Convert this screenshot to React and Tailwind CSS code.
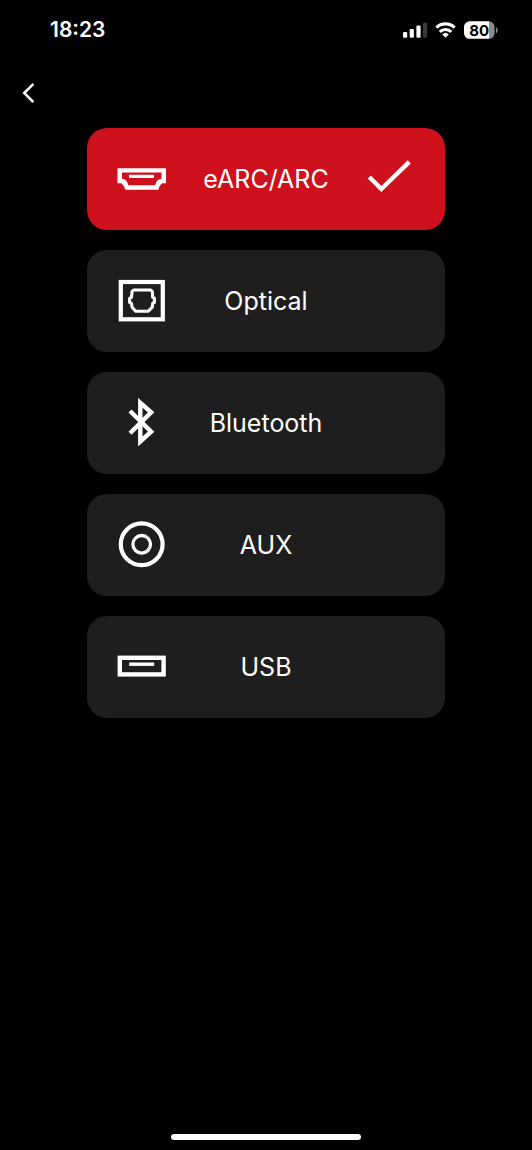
import { useState } from "react";

function HdmiIcon() {
  return (
    <svg viewBox="0 0 50 50" className="size-[50px]" fill="currentColor" aria-hidden="true">
      <path
        fillRule="evenodd"
        d="M.5 14.3H49V29.3H45.2Q42.2 31.5 41.3 35.7H8.3Q7.3 31.5 4.3 29.3H.5ZM5 18.4V24.8L8.2 25.8Q10.4 27.5 11.4 31.2H38.1Q39.1 27.5 41.3 25.8L44.5 24.8V18.4Z"
      />
      <path d="M12 20.8H37V24H12Z" />
    </svg>
  );
}

function OpticalIcon() {
  return (
    <svg viewBox="0 0 50 50" className="size-[50px]" fill="none" stroke="currentColor" aria-hidden="true">
      <rect x="3.8" y="6" width="42" height="37.3" strokeWidth="4.2" />
      <path
        strokeWidth="3.1"
        strokeLinejoin="round"
        d="M16.8 14H33.5L35.3 15.4L35.7 21.4L37.4 22.4V26.4L35.7 27.4L35.3 31.2L31.3 35.2H18.7L15.1 31.2L14.5 27.4L12.6 26.4V22.4L14.5 21.4L15.1 15.4Z"
      />
    </svg>
  );
}

function BluetoothIcon() {
  return (
    <svg viewBox="0 0 50 50" className="size-[50px]" fill="none" stroke="currentColor" aria-hidden="true">
      <path strokeWidth="4.4" d="M13 13L34.2 33.7L23.3 43.5V4.8L34.2 14.4L13 35.3" />
    </svg>
  );
}

function AuxIcon() {
  return (
    <svg viewBox="0 0 50 50" className="size-[50px]" fill="none" stroke="currentColor" aria-hidden="true">
      <circle cx="24.7" cy="24.3" r="20.9" strokeWidth="4.2" />
      <circle cx="24.7" cy="24.3" r="8.8" strokeWidth="3.3" />
    </svg>
  );
}

function UsbIcon() {
  return (
    <svg viewBox="0 0 50 50" className="size-[50px]" fill="none" stroke="currentColor" aria-hidden="true">
      <rect x="2.8" y="15.8" width="43.8" height="16.6" strokeWidth="4.4" />
      <path strokeWidth="3.4" d="M12.2 22.2H37.2" />
    </svg>
  );
}

function CheckIcon() {
  return (
    <svg viewBox="0 0 50 50" className="size-[50px]" fill="none" stroke="currentColor" aria-hidden="true">
      <path strokeWidth="4.4" d="M4.3 23L16.3 35L44.3 7.8" />
    </svg>
  );
}

function StatusIcons() {
  return (
    <svg viewBox="0 0 96 20" className="h-5 w-24" fill="currentColor" role="img" aria-label="Signal, Wi-Fi, battery 80%">
      <rect x="1" y="12" width="4.2" height="5.7" rx="1.2" />
      <rect x="7.7" y="9" width="4.2" height="8.7" rx="1.2" />
      <rect x="14.4" y="5.4" width="4.2" height="12.3" rx="1.2" />
      <rect x="21" y="2.6" width="4.2" height="15.1" rx="1.2" fill="#3a3a3a" />
      <g fill="none" stroke="currentColor" strokeWidth="3.2">
        <path d="M34.4 7.6A13.2 13.2 0 0 1 52.6 7.6" />
        <path d="M37.8 11.8A8.2 8.2 0 0 1 49.2 11.8" />
      </g>
      <path d="M43.5 17.8L40.2 14.4A4.8 4.8 0 0 1 46.8 14.4Z" />
      <path d="M67.5 1.3H87V18.8H67.5A5.5 5.5 0 0 1 62 13.3V6.8A5.5 5.5 0 0 1 67.5 1.3Z" />
      <path fill="#8b8b8b" d="M87 1.3A5.5 5.5 0 0 1 92.5 6.8V13.3A5.5 5.5 0 0 1 87 18.8Z" />
      <path fill="#8b8b8b" d="M94 7.2C96.3 8 96.3 12.4 94 13.2Z" />
      <text x="77.3" y="15.6" textAnchor="middle" fill="#000" className="font-['Inter',sans-serif] text-[15px] font-bold">
        80
      </text>
    </svg>
  );
}

const sources = [
  { id: "arc", label: "eARC/ARC", Icon: HdmiIcon },
  { id: "optical", label: "Optical", Icon: OpticalIcon },
  { id: "bluetooth", label: "Bluetooth", Icon: BluetoothIcon },
  { id: "aux", label: "AUX", Icon: AuxIcon },
  { id: "usb", label: "USB", Icon: UsbIcon },
];

function SourceButton({ label, Icon, active, onSelect }) {
  return (
    <button
      type="button"
      aria-pressed={active}
      onClick={onSelect}
      className={`grid h-[102px] w-full grid-cols-[50px_1fr_50px] items-center rounded-[20px] px-[30px] text-white ${
        active ? "bg-[#cf111e]" : "bg-[#1e1e1e]"
      }`}
    >
      <Icon />
      <span className="text-center text-[25px] leading-8">{label}</span>
      {active && <CheckIcon />}
    </button>
  );
}

export default function App() {
  const [selected, setSelected] = useState("arc");

  return (
    <div className="flex min-h-screen flex-col bg-black font-['Inter',sans-serif] text-white">
      <header>
        <div className="flex h-[60px] items-center justify-between pr-[34px] pl-[50px]">
          <time className="text-[21px] font-semibold">18:23</time>
          <StatusIcons />
        </div>
        <nav className="flex h-[66px] items-center pl-4">
          <button type="button" aria-label="Back" className="flex size-6 items-center justify-center">
            <svg viewBox="0 0 24 24" className="size-6" fill="none" stroke="currentColor" strokeWidth="2.5" aria-hidden="true">
              <path d="M17.4 2.8L8.2 12L17.4 21.2" />
            </svg>
          </button>
        </nav>
      </header>
      <main className="flex flex-1 flex-col gap-5 px-[87px] pt-0.5">
        {sources.map(({ id, label, Icon }) => (
          <SourceButton
            key={id}
            label={label}
            Icon={Icon}
            active={selected === id}
            onSelect={() => setSelected(id)}
          />
        ))}
      </main>
      <footer className="flex justify-center pb-2.5">
        <div className="h-1.5 w-[190px] rounded-full bg-white" />
      </footer>
    </div>
  );
}
